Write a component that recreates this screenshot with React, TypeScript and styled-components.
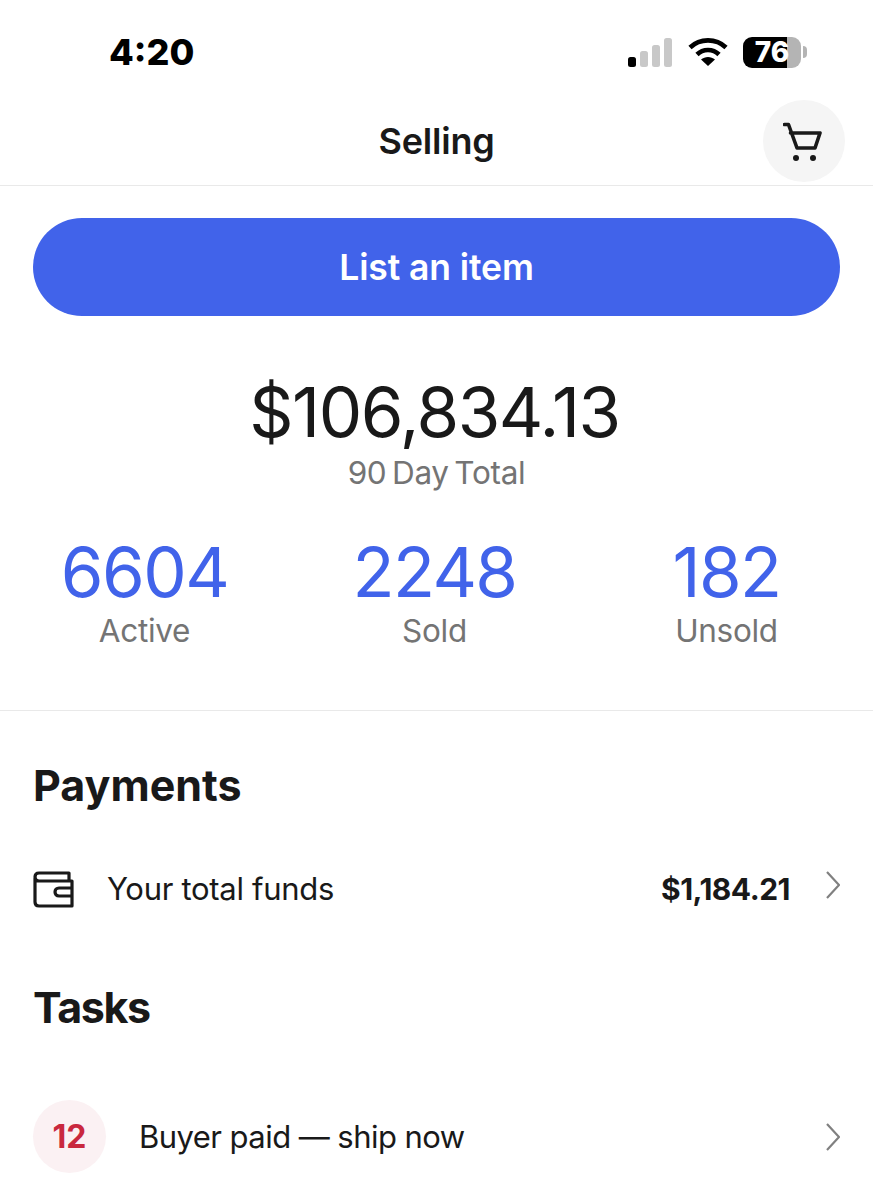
import styled, { createGlobalStyle } from "styled-components";

const GlobalStyle = createGlobalStyle`
  html, body {
    margin: 0;
    padding: 0;
    background: #fff;
  }
  body {
    font-family: Inter, "Liberation Sans", sans-serif;
    color: #191919;
  }
`;

const Page = styled.div`
  width: 873px;
  height: 1200px;
  overflow: hidden;
  background: #fff;
`;

const StatusBar = styled.div`
  height: 100px;
  display: flex;
  align-items: center;
  justify-content: space-between;
  padding: 4px 66px 0 109px;
  box-sizing: border-box;
`;

const Time = styled.div`
  font-size: 36px;
  font-weight: 800;
  color: #000;
`;

const StatusIcons = styled.div`
  display: flex;
  align-items: center;
  gap: 15px;
`;

const Battery = styled.div`
  width: 58px;
  height: 31px;
  border-radius: 9px;
  overflow: hidden;
  background: linear-gradient(to right, #000 76%, #b4b4b4 76%);
  display: flex;
  align-items: center;
  justify-content: center;
  font-size: 28px;
  font-weight: 800;
  color: #fff;
`;

const BatteryWrap = styled.div`
  display: flex;
  align-items: center;
  gap: 2px;
`;

const BatteryCap = styled.div`
  width: 4px;
  height: 12px;
  border-radius: 0 4px 4px 0;
  background: #b4b4b4;
`;

const Header = styled.header`
  position: relative;
  height: 86px;
  box-sizing: border-box;
  border-bottom: 1px solid #e9e9e9;
  display: flex;
  align-items: center;
  justify-content: center;
  padding-bottom: 3px;
`;

const Title = styled.h1`
  margin: 0;
  font-size: 36px;
  font-weight: 600;
  letter-spacing: -0.2px;
`;

const CartButton = styled.div`
  position: absolute;
  top: 0;
  right: 28px;
  width: 82px;
  height: 82px;
  border-radius: 50%;
  background: #f5f5f5;
  display: flex;
  align-items: center;
  justify-content: center;
`;

const ListButton = styled.div`
  margin: 32px 33px 0;
  height: 98px;
  padding-top: 1px;
  box-sizing: border-box;
  border-radius: 49px;
  background: #4163ea;
  color: #fff;
  display: flex;
  align-items: center;
  justify-content: center;
  font-size: 35.5px;
  font-weight: 600;
  letter-spacing: -0.1px;
`;

const Summary = styled.section`
  padding-top: 55px;
  display: flex;
  flex-direction: column;
  align-items: center;
`;

const Amount = styled.div`
  padding-right: 4px;
  font-size: 69px;
  line-height: 83px;
  font-weight: 400;
  letter-spacing: -1.5px;
`;

const Muted = styled.div`
  font-size: 31.5px;
  line-height: 38px;
  color: #747474;
  letter-spacing: -0.3px;
  word-spacing: -3px;
`;

const Stats = styled.div`
  display: grid;
  grid-template-columns: 289px 291px 293px;
  padding: 40px 0 60px;
  border-bottom: 1px solid #e9e9e9;
`;

const Stat = styled.div`
  display: flex;
  flex-direction: column;
  align-items: center;
`;

const StatValue = styled.div`
  font-size: 69px;
  line-height: 80px;
  color: #4163ea;
  letter-spacing: -1.6px;
`;

const SectionTitle = styled.h2<{ $top: number; $tracking: number }>`
  margin: ${(p) => p.$top}px 0 0 33px;
  font-size: 43px;
  line-height: 50px;
  font-weight: 700;
  letter-spacing: ${(p) => p.$tracking}px;
`;

const Row = styled.div<{ $top: number; $gap: number }>`
  display: flex;
  align-items: center;
  gap: ${(p) => p.$gap}px;
  margin-top: ${(p) => p.$top}px;
  padding: 0 33px;
`;

const RowLabel = styled.div<{ $tracking: number }>`
  flex: 1;
  font-size: 31px;
  line-height: 40px;
  letter-spacing: ${(p) => p.$tracking}px;
`;

const RowValue = styled.div`
  font-size: 30px;
  font-weight: 700;
  letter-spacing: -0.5px;
  margin-right: 3px;
`;

const Badge = styled.div`
  width: 73px;
  height: 73px;
  border-radius: 50%;
  background: #fbf1f3;
  color: #c9283e;
  display: flex;
  align-items: center;
  justify-content: center;
  font-size: 32px;
  font-weight: 700;
`;

const ChevronSvg = styled.svg<{ $raised?: boolean }>`
  width: 14px;
  height: 28px;
  flex-shrink: 0;
  margin-top: ${(p) => (p.$raised ? "-8px" : "0")};
`;

function Chevron({ raised }: { raised?: boolean }) {
  return (
    <ChevronSvg $raised={raised} viewBox="0 0 14 28" fill="none">
      <path d="M1 1L13 14L1 27" stroke="#808080" strokeWidth="2.2" />
    </ChevronSvg>
  );
}

function SignalIcon() {
  return (
    <svg width="46" height="30" viewBox="0 0 46 30">
      <rect x="1" y="20" width="8" height="10" rx="2.5" fill="#000" />
      <rect x="13" y="14" width="8" height="16" rx="2.5" fill="#c8c8c8" />
      <rect x="25" y="8" width="8" height="22" rx="2.5" fill="#c8c8c8" />
      <rect x="37" y="1" width="8" height="29" rx="2.5" fill="#c8c8c8" />
    </svg>
  );
}

function WifiIcon() {
  return (
    <svg width="40" height="30" viewBox="0 0 40 30" fill="none">
      <path d="M2 10.5C12 1 28 1 38 10.5" stroke="#000" strokeWidth="4.6" />
      <path d="M9 17.5C15 11.5 25 11.5 31 17.5" stroke="#000" strokeWidth="4.6" />
      <path d="M20 29L13 22.5C17 19 23 19 27 22.5Z" fill="#000" />
    </svg>
  );
}

function CartIcon() {
  return (
    <svg width="42" height="42" viewBox="0 0 42 42" fill="none">
      <path
        d="M1.5 4.5H5.5L14 28H32L37 13H7.5"
        stroke="#191919"
        strokeWidth="3.6"
        strokeLinecap="round"
        strokeLinejoin="round"
      />
      <circle cx="13" cy="38" r="3" fill="#191919" />
      <circle cx="30" cy="38" r="3" fill="#191919" />
    </svg>
  );
}

function WalletIcon() {
  return (
    <svg width="41" height="38" viewBox="0 0 41 38" fill="none">
      <path
        d="M2 8V32C2 34.5 3.5 36 6 36H39V11H6C3.5 11 2 9.5 2 7C2 4.5 3.5 3 6 3H36V11"
        stroke="#191919"
        strokeWidth="3.2"
        strokeLinejoin="round"
      />
      <path
        d="M39 18H26C23.5 18 22 19.8 22 22C22 24.2 23.5 26 26 26H39"
        stroke="#191919"
        strokeWidth="3.2"
      />
    </svg>
  );
}

export default function App() {
  return (
    <Page>
      <GlobalStyle />
      <StatusBar>
        <Time>4:20</Time>
        <StatusIcons>
          <SignalIcon />
          <WifiIcon />
          <BatteryWrap>
            <Battery>76</Battery>
            <BatteryCap />
          </BatteryWrap>
        </StatusIcons>
      </StatusBar>
      <Header>
        <Title>Selling</Title>
        <CartButton>
          <CartIcon />
        </CartButton>
      </Header>
      <ListButton>List an item</ListButton>
      <Summary>
        <Amount>$106,834.13</Amount>
        <Muted>90 Day Total</Muted>
      </Summary>
      <Stats>
        <Stat>
          <StatValue>6604</StatValue>
          <Muted>Active</Muted>
        </Stat>
        <Stat>
          <StatValue>2248</StatValue>
          <Muted>Sold</Muted>
        </Stat>
        <Stat>
          <StatValue>182</StatValue>
          <Muted>Unsold</Muted>
        </Stat>
      </Stats>
      <SectionTitle $top={49} $tracking={0}>Payments</SectionTitle>
      <Row $top={59} $gap={33}>
        <WalletIcon />
        <RowLabel $tracking={-0.3}>Your total funds</RowLabel>
        <RowValue>$1,184.21</RowValue>
        <Chevron raised />
      </Row>
      <SectionTitle $top={73} $tracking={-1.4}>Tasks</SectionTitle>
      <Row $top={68} $gap={33}>
        <Badge>12</Badge>
        <RowLabel $tracking={-0.55}>Buyer paid — ship now</RowLabel>
        <Chevron />
      </Row>
    </Page>
  );
}
